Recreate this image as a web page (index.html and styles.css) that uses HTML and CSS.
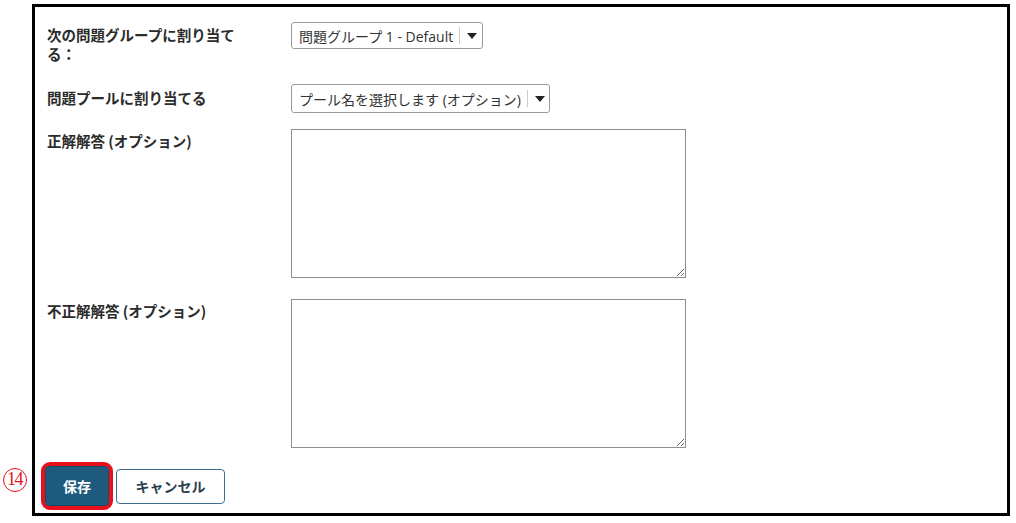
FILE: index.html
```html
<!DOCTYPE html>
<html lang="ja">
<head>
  <meta charset="UTF-8" />
  <title>問題の設定</title>
  <link rel="stylesheet" href="styles.css">
</head>
<body>

  <div class="frame">
    <div class="row row-group">
      <label class="label">次の問題グループに割り当て る：</label>
      <div class="select select-group">
        <span class="select-text">問題グループ 1 - Default</span>
        <span class="select-arrow"></span>
      </div>
    </div>

    <div class="row row-pool">
      <label class="label">問題プールに割り当てる</label>
      <div class="select select-pool">
        <span class="select-text">プール名を選択します (オプション)</span>
        <span class="select-arrow"></span>
      </div>
    </div>

    <div class="row row-answer">
      <label class="label">正解解答 (オプション)</label>
      <textarea class="answer"></textarea>
    </div>

    <div class="row row-answer">
      <label class="label">不正解解答 (オプション)</label>
      <textarea class="answer"></textarea>
    </div>

    <div class="actions">
      <span class="mark">14</span>
      <div class="highlight">
        <button class="btn btn-save">保存</button>
      </div>
      <button class="btn btn-cancel">キャンセル</button>
    </div>
  </div>

</body>
</html>
```

FILE: styles.css
```css
* {
  box-sizing: border-box;
}

body {
  margin: 0;
  background: #fff;
  font-family: "Noto Sans CJK JP", "Noto Sans", sans-serif;
  color: #333;
  padding: 4px 6px 0 32px;
}

.frame {
  border: 3px solid #000;
  width: 978px;
  height: 512px;
  padding: 15px 0 0 12px;
  position: relative;
}

.row {
  display: grid;
  grid-template-columns: 244px 1fr;
  align-items: start;
  margin-bottom: 21px;
}

.row-group .label {
  line-height: 19px;
}

.row-pool {
  margin-bottom: 16px;
}

.label {
  font-size: 14.5px;
  font-weight: bold;
  line-height: 20px;
  width: 200px;
  padding-top: 3px;
  color: #2b2b2b;
}

.row-pool .label {
  padding-top: 4px;
}

.select {
  display: flex;
  align-items: center;
  height: 27px;
  border: 1px solid #9a9a9a;
  border-radius: 3px;
  padding: 0 0 0 7px;
  font-family: "Open Sans", "Noto Sans CJK JP", sans-serif;
  font-size: 14px;
  color: #333;
  background: #fff;
}

.select-group {
  width: 192px;
}

.select-pool {
  width: 259px;
  height: 29px;
}

.select-text {
  white-space: nowrap;
  padding-right: 6px;
}

.select-arrow {
  position: relative;
  height: 17px;
  border-left: 1px solid #ccc;
  width: 24px;
}

.select-arrow::after {
  content: "";
  position: absolute;
  left: 7px;
  top: 6px;
  border-left: 5px solid transparent;
  border-right: 5px solid transparent;
  border-top: 6px solid #222;
}

.answer {
  display: block;
  width: 395px;
  height: 149px;
  border: 1px solid #8f8f8f;
  margin: 0;
  font-family: inherit;
}

.row-answer .label {
  padding-top: 2px;
}

.actions {
  display: flex;
  align-items: center;
  gap: 3px;
  margin-left: -6px;
  margin-top: -7px;
}

.mark {
  position: absolute;
  left: -32px;
  bottom: 21px;
  width: 24px;
  height: 24px;
  border: 1.5px solid #e0141c;
  border-radius: 50%;
  font-family: "Liberation Serif", "DejaVu Serif", serif;
  font-size: 18px;
  line-height: 21px;
  letter-spacing: -1.5px;
  text-indent: -1px;
  text-align: center;
  color: #e0141c;
}

.highlight {
  border: 4px solid #e8101a;
  border-radius: 9px;
  padding: 0;
}

.btn {
  font-family: "Noto Sans CJK JP", sans-serif;
  font-weight: bold;
  font-size: 14px;
  border-radius: 4px;
  cursor: pointer;
}

.btn-save {
  display: block;
  width: 64px;
  height: 40px;
  background: #1d5a7d;
  color: #fff;
  border: 1px solid #174a68;
}

.btn-cancel {
  width: 109px;
  height: 35px;
  background: #fff;
  color: #2a3f50;
  border: 1px solid #3f6f8e;
}
```
